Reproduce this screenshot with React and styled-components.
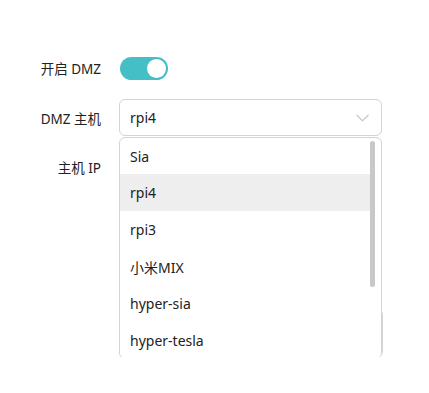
import React from "react";
import styled, { createGlobalStyle } from "styled-components";

const Global = createGlobalStyle`
  html, body { margin: 0; padding: 0; background: #fff; }
  body { font-family: "Noto Sans", "Noto Sans CJK SC", sans-serif; color: #333; }
`;

const Form = styled.div`
  display: flex;
  flex-direction: column;
  gap: 12px;
  padding-top: 49px;
`;

const Row = styled.div`
  display: flex;
  align-items: center;
  min-height: ${(p) => p.$h || 38}px;
  margin-top: ${(p) => p.$mt || 0}px;
`;

const Label = styled.div`
  width: 101px;
  margin-right: 18px;
  text-align: right;
  font-size: 13.5px;
  color: #222;
  flex-shrink: 0;
`;

const Switch = styled.div`
  width: 48px;
  height: 23px;
  border-radius: 12px;
  background: #44bfc6;
  display: flex;
  align-items: center;
  justify-content: flex-end;
  padding: 0 2px;
  box-sizing: border-box;
  margin-left: 1px;
`;

const Knob = styled.div`
  width: 19px;
  height: 19px;
  border-radius: 50%;
  background: #fff;
`;

const SelectWrap = styled.div`
  position: relative;
  width: 263px;
`;

const SelectBox = styled.div`
  height: 37px;
  box-sizing: border-box;
  border: 1px solid #d4d4d4;
  border-radius: 6px;
  display: flex;
  align-items: center;
  justify-content: space-between;
  padding: 0 12px 0 10px;
  font-size: 14px;
  color: #222;
`;

const Menu = styled.div`
  position: absolute;
  top: 38px;
  left: 0;
  width: 263px;
  height: 222px;
  box-sizing: border-box;
  border: 1px solid #d4d4d4;
  border-radius: 6px;
  background: #fff;
  overflow: hidden;
  z-index: 10;
`;

const List = styled.div`
  margin-right: 10px;
`;

const Item = styled.div`
  height: 37px;
  display: flex;
  align-items: center;
  padding-left: 10px;
  font-size: 14px;
  color: #222;
  background: ${(p) => (p.$active ? "#eeeeee" : "transparent")};
  &:first-child { height: 36px; }
`;

const Thumb = styled.div`
  position: absolute;
  right: 6px;
  top: 3px;
  width: 5px;
  height: 146px;
  border-radius: 3px;
  background: #c8c8c8;
`;

const Input = styled.div`
  width: ${(p) => p.$w || 263}px;
  height: ${(p) => p.$h || 38}px;
  box-sizing: border-box;
  border: 1px solid #d4d4d4;
  border-radius: 6px;
`;

const items = ["Sia", "rpi4", "rpi3", "小米MIX", "hyper-sia", "hyper-tesla"];

export default function App() {
  return (
    <>
      <Global />
      <Form>
        <Row>
          <Label>开启 DMZ</Label>
          <Switch>
            <Knob />
          </Switch>
        </Row>
        <Row $h={37}>
          <Label>DMZ 主机</Label>
          <SelectWrap>
            <SelectBox>
              <span>rpi4</span>
              <svg width="13" height="8" viewBox="0 0 13 8" fill="none">
                <path d="M0.5 0.8 L6.5 6.8 L12.5 0.8" stroke="#bdbdbd" strokeWidth="1.1" />
              </svg>
            </SelectBox>
            <Menu>
              <List>
                {items.map((t) => (
                  <Item key={t} $active={t === "rpi4"}>{t}</Item>
                ))}
              </List>
              <Thumb />
            </Menu>
          </SelectWrap>
        </Row>
        <Row>
          <Label>主机 IP</Label>
          <Input />
        </Row>
        <Row $mt={111} $h={48}>
          <Label />
          <Input $w={264} $h={48} />
        </Row>
      </Form>
    </>
  );
}
